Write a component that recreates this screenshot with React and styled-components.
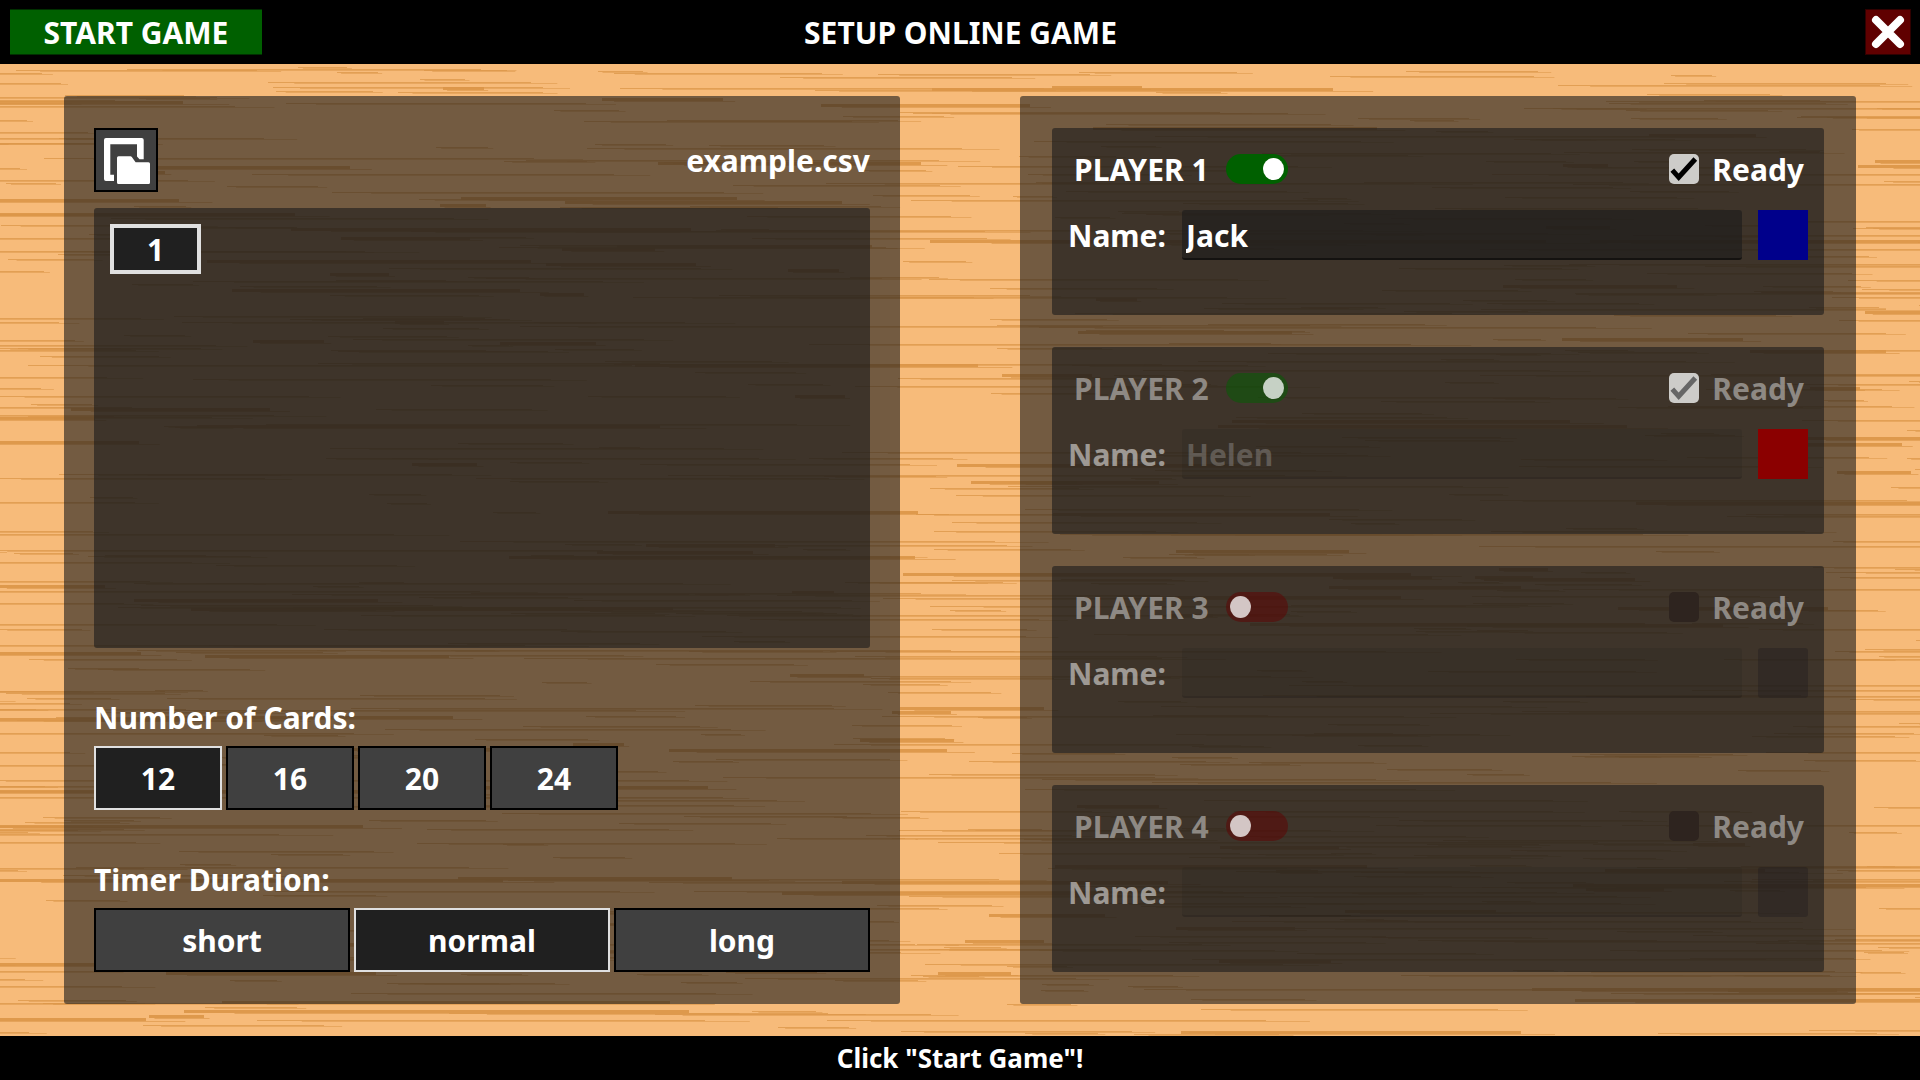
import React, { useState } from "react";
import styled, { createGlobalStyle } from "styled-components";

const CARD_COUNTS = ["12", "16", "20", "24"];
const DURATIONS = ["short", "normal", "long"];

const PLAYERS = [
  { id: 1, active: true, ready: true, name: "Jack", color: "#00008b", editable: true },
  { id: 2, active: true, ready: true, name: "Helen", color: "#8b0000", editable: false },
  { id: 3, active: false, ready: false, name: "", color: "", editable: false },
  { id: 4, active: false, ready: false, name: "", color: "", editable: false },
];

// small seeded generator, so the wood grain is the same on every load
function makeRandom(seed) {
  let s = seed;
  return () => {
    s = (s * 1664525 + 1013904223) % 4294967296;
    return s / 4294967296;
  };
}

function makeGrain() {
  const random = makeRandom(77);
  const streaks = [];
  for (let i = 0; i < 900; i++) {
    const x = Math.round(random() * 2220 - 300);
    const y = Math.round(random() * 972);
    const w = Math.round(40 + random() * random() * 640);
    const heavy = random() > 0.85;
    streaks.push({ x, y, w, h: heavy ? 3 : 1, o: heavy ? 0.9 : 0.75 });
  }
  return streaks;
}

const GRAIN = makeGrain();

function WoodGrain() {
  return (
    <Grain viewBox="0 0 1920 972" preserveAspectRatio="xMidYMid slice" aria-hidden="true">
      {GRAIN.map((g, i) => (
        <g key={i} fill="#dc9648" opacity={g.o}>
          <rect x={g.x} y={g.y} width={g.w} height={g.h} />
          <rect x={g.x + g.w * 0.1} y={g.y + g.h} width={g.w} height="1" opacity="0.7" />
        </g>
      ))}
    </Grain>
  );
}

function PlayerCard({ player }) {
  const [active, setActive] = useState(player.active);
  const [ready, setReady] = useState(player.ready);
  const [name, setName] = useState(player.name);
  const disabled = !player.editable;

  return (
    <Card>
      <Row>
        <PlayerLabel htmlFor={`active-${player.id}`} $dim={disabled}>
          PLAYER {player.id}
        </PlayerLabel>
        <Switch
          id={`active-${player.id}`}
          type="checkbox"
          role="switch"
          checked={active}
          disabled={disabled}
          onChange={(e) => setActive(e.target.checked)}
        />
        <ReadyLabel $dim={disabled}>
          <CheckBox
            type="checkbox"
            checked={ready}
            disabled={disabled}
            onChange={(e) => setReady(e.target.checked)}
          />
          Ready
        </ReadyLabel>
      </Row>
      <Row>
        <NameLabel htmlFor={`name-${player.id}`} $dim={disabled}>
          Name:
        </NameLabel>
        <NameInput
          id={`name-${player.id}`}
          type="text"
          value={name}
          disabled={disabled}
          onChange={(e) => setName(e.target.value)}
        />
        <Swatch
          type="button"
          aria-label={`Colour of player ${player.id}`}
          disabled={disabled}
          $color={player.color}
        />
      </Row>
    </Card>
  );
}

export default function App() {
  const [count, setCount] = useState("12");
  const [duration, setDuration] = useState("normal");

  return (
    <>
      <GlobalStyle />
      <Page>
        <Header>
          <StartButton type="button">START GAME</StartButton>
          <Title>SETUP ONLINE GAME</Title>
          <CloseButton type="button" aria-label="Close">
            <svg width="44" height="44" viewBox="0 0 44 44" aria-hidden="true">
              <path d="M10 10 34 34M34 10 10 34" stroke="#fff" strokeWidth="8" strokeLinecap="round" />
            </svg>
          </CloseButton>
        </Header>

        <Main>
          <WoodGrain />
          <SetupPanel>
            <FileBar>
              <FileButton type="button" aria-label="Open file">
                <svg width="60" height="60" viewBox="0 0 60 60" fill="#fff" aria-hidden="true">
                  <path d="M10 8H45.7A2 2 0 0 1 47.7 10V29.3H43.5L41 26.5V14.2H14.3V44.7H18V51H10A2 2 0 0 1 8 49V10A2 2 0 0 1 10 8Z" />
                  <path d="M22.5 26.3H34.5Q35.3 26.3 36 27.2L39.6 32.3H52.5A1.5 1.5 0 0 1 54 33.8V52.5A1.5 1.5 0 0 1 52.5 54H22.5A1.5 1.5 0 0 1 21 52.5V27.8A1.5 1.5 0 0 1 22.5 26.3Z" />
                </svg>
              </FileButton>
              <FileName>example.csv</FileName>
            </FileBar>

            <CardArea>
              <CardTile type="button">1</CardTile>
            </CardArea>

            <OptionGroup>
              <Legend>Number of Cards:</Legend>
              <Options>
                {CARD_COUNTS.map((c) => (
                  <OptionButton
                    key={c}
                    type="button"
                    aria-pressed={c === count}
                    $selected={c === count}
                    onClick={() => setCount(c)}
                  >
                    {c}
                  </OptionButton>
                ))}
              </Options>
            </OptionGroup>

            <OptionGroup>
              <Legend>Timer Duration:</Legend>
              <Options>
                {DURATIONS.map((d) => (
                  <OptionButton
                    key={d}
                    type="button"
                    aria-pressed={d === duration}
                    $selected={d === duration}
                    $wide
                    onClick={() => setDuration(d)}
                  >
                    {d}
                  </OptionButton>
                ))}
              </Options>
            </OptionGroup>
          </SetupPanel>

          <PlayerPanel>
            {PLAYERS.map((p) => (
              <PlayerCard key={p.id} player={p} />
            ))}
          </PlayerPanel>
        </Main>

        <Footer>Click "Start Game"!</Footer>
      </Page>
    </>
  );
}

const checkMark = (color) =>
  `url("data:image/svg+xml,%3Csvg xmlns='http://www.w3.org/2000/svg' viewBox='0 0 30 30'%3E%3Cpath d='M3.3 16.2 9.7 23.3 26.3 5' fill='none' stroke='%23${color}' stroke-width='5'/%3E%3C/svg%3E")`;

const GlobalStyle = createGlobalStyle`
  * {
    box-sizing: border-box;
  }

  body {
    margin: 0;
    background: #000;
  }

  body, button, input {
    font-family: "Noto Sans", "Open Sans", sans-serif;
    font-size: 30px;
    font-weight: 700;
    line-height: 41px;
    color: #fff;
  }

  button {
    padding: 0;
    cursor: pointer;
  }
`;

const Page = styled.div`
  display: flex;
  flex-direction: column;
  min-height: 100vh;
`;

const Header = styled.header`
  display: grid;
  grid-template-columns: 1fr auto 1fr;
  align-items: center;
  height: 64px;
  padding: 0 9px 0 10px;
  background: #000;
`;

const StartButton = styled.button`
  width: 252px;
  height: 46px;
  border: 0 solid #003000;
  border-width: 1px 0;
  background: #006000;
`;

const Title = styled.h1`
  margin: 0;
  font-size: 30px;
`;

const CloseButton = styled.button`
  display: flex;
  justify-self: end;
  width: 46px;
  height: 46px;
  border: 1px solid #300000;
  background: #600000;
`;

const Main = styled.main`
  position: relative;
  flex: 1;
  display: grid;
  grid-template-columns: 1fr 1fr;
  gap: 120px;
  padding: 32px 64px;
  background: #f7bb7a;
  isolation: isolate;
`;

const Grain = styled.svg`
  position: absolute;
  inset: 0;
  width: 100%;
  height: 100%;
  z-index: -1;
`;

const Panel = styled.section`
  display: flex;
  flex-direction: column;
  border-radius: 3px;
  background: rgba(26, 26, 26, 0.6);
`;

const SetupPanel = styled(Panel)`
  padding: 32px 30px;
`;

const PlayerPanel = styled(Panel)`
  gap: 32px;
  padding: 32px;
`;

const FileBar = styled.div`
  display: flex;
  align-items: center;
  justify-content: space-between;
  margin-bottom: 16px;
`;

const FileButton = styled.button`
  display: flex;
  width: 64px;
  height: 64px;
  border: 2px solid #000;
  background: #404040;
`;

const FileName = styled.span`
  text-align: right;
`;

const CardArea = styled.div`
  flex: 1;
  padding: 16px;
  border-radius: 3px;
  background: rgba(26, 26, 26, 0.6);
`;

const CardTile = styled.button`
  display: block;
  width: 91px;
  height: 50px;
  border: 4px solid #e0e0e0;
  background: #202020;
`;

const OptionGroup = styled.div`
  display: flex;
  flex-direction: column;
  gap: 8px;
  margin-top: 49px;
`;

const Legend = styled.h2`
  margin: 0;
  font-size: 30px;
`;

const Options = styled.div`
  display: flex;
  gap: 4px;
`;

const OptionButton = styled.button`
  flex: ${(p) => (p.$wide ? "1" : "0 0 128px")};
  height: 64px;
  border: 2px solid ${(p) => (p.$selected ? "#e0e0e0" : "#000")};
  background: ${(p) => (p.$selected ? "#202020" : "#404040")};
`;

const Card = styled.div`
  flex: 1;
  display: flex;
  flex-direction: column;
  gap: 16px;
  padding: 16px;
  border-radius: 3px;
  background: rgba(26, 26, 26, 0.6);
`;

const Row = styled.div`
  display: flex;
  align-items: center;
  height: 50px;
`;

const PlayerLabel = styled.label`
  width: 158px;
  padding-left: 6px;
  color: ${(p) => (p.$dim ? "rgba(223, 223, 223, 0.5)" : "#fff")};
`;

const Switch = styled.input`
  appearance: none;
  display: flex;
  align-items: center;
  width: 62px;
  height: 30px;
  margin: 0;
  padding: 0 4px;
  border-radius: 15px;
  background: #600000;

  &::before {
    content: "";
    width: 21px;
    height: 22px;
    border-radius: 50%;
    background: #fff;
  }

  &:checked {
    justify-content: flex-end;
    background: #006000;
  }

  &:disabled {
    background: rgba(96, 0, 0, 0.5);
  }

  &:disabled::before {
    background: #d3c6c5;
  }

  &:checked:disabled {
    background: rgba(0, 96, 0, 0.5);
  }

  &:checked:disabled::before {
    background: #c6d1c5;
  }
`;

const ReadyLabel = styled.label`
  display: flex;
  align-items: center;
  gap: 13px;
  margin-left: auto;
  padding-right: 4px;
  color: ${(p) => (p.$dim ? "rgba(223, 223, 223, 0.5)" : "#fff")};
`;

const CheckBox = styled.input`
  appearance: none;
  width: 30px;
  height: 30px;
  margin: 0;
  border-radius: 5px;
  background: #2e241f;

  &:checked {
    background: #cdccc9 ${checkMark("000")};
  }

  &:checked:disabled {
    background: #cdccc9 ${checkMark("666")};
  }
`;

const NameLabel = styled.label`
  width: 98px;
  margin-right: 16px;
  color: ${(p) => (p.$dim ? "rgba(255, 255, 255, 0.5)" : "#fff")};
`;

const NameInput = styled.input`
  flex: 1;
  min-width: 0;
  height: 50px;
  padding: 2px 4px 0;
  border: 0;
  border-bottom: 2px solid rgba(0, 0, 0, 0.5);
  border-radius: 3px;
  outline: 0;
  background: rgba(26, 26, 26, 0.6);

  &:disabled {
    border-bottom-color: rgba(0, 0, 0, 0.1);
    background: rgba(26, 26, 26, 0.15);
    color: rgba(223, 223, 223, 0.25);
  }
`;

const Swatch = styled.button`
  width: 50px;
  height: 50px;
  margin-left: 16px;
  border: 0;
  border-radius: ${(p) => (p.$color ? "0" : "3px")};
  background: ${(p) => p.$color || "rgba(32, 28, 30, 0.4)"};
`;

const Footer = styled.footer`
  height: 44px;
  background: #000;
  font-size: 26px;
  line-height: 44px;
  text-align: center;
`;
